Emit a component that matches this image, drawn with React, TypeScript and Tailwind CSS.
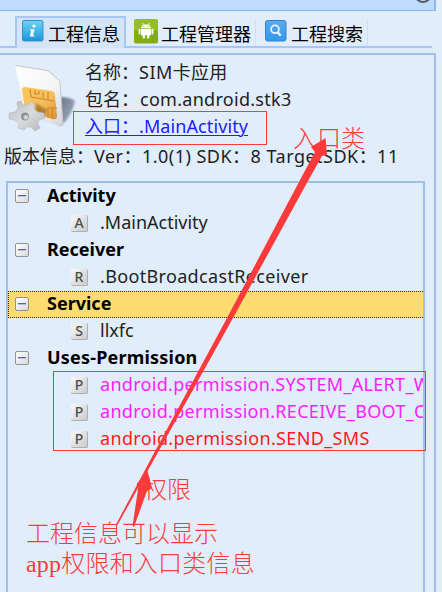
import type { ReactNode } from "react";

const ui = "font-['Noto_Sans','Noto_Sans_CJK_SC',sans-serif]";
const note = "font-['Liberation_Serif','Noto_Sans_CJK_SC',serif] font-light text-[#fb3a3c]";

function InfoIcon() {
  return (
    <svg width="22" height="22" viewBox="0 0 22 22" className="block shrink-0">
      <defs>
        <linearGradient id="info" x1="0" y1="0" x2="0" y2="1">
          <stop offset="0" stopColor="#6fd0f2" />
          <stop offset="0.5" stopColor="#45b7e8" />
          <stop offset="1" stopColor="#1b93d6" />
        </linearGradient>
      </defs>
      <rect x="0.5" y="0.5" width="20.5" height="20.5" rx="1.5" fill="url(#info)" stroke="#3592c8" />
      <circle cx="12" cy="6" r="1.6" fill="#fff" />
      <path d="M8.3 9.2H12.5L11 15.2H12.3V16.5H7.8L9.3 10.5H8Z" fill="#fff" />
    </svg>
  );
}

function AndroidIcon() {
  return (
    <svg width="24" height="25" viewBox="0 0 24 25" className="block shrink-0">
      <rect width="24" height="24.5" rx="2.5" fill="#82ad12" />
      <path d="M0 3Q0 0 3 0H21Q24 0 24 3V11Q12 14 0 11Z" fill="#94bf2a" />
      <path d="M8.3 4L9.7 6.2M15.7 4L14.3 6.2" stroke="#fff" strokeWidth="0.8" />
      <path d="M7 9.3C7 4.2 17 4.2 17 9.3Z" fill="#fff" />
      <circle cx="9.8" cy="7.5" r="0.6" fill="#8db51d" />
      <circle cx="14.2" cy="7.5" r="0.6" fill="#8db51d" />
      <path d="M7 10H17V16.2H15.3V19Q14.2 20.2 13.1 19V16.2H10.9V19Q9.8 20.2 8.7 19V16.2H7Z" fill="#fff" />
      <rect x="4.6" y="9.8" width="1.8" height="5.7" rx="0.9" fill="#fff" />
      <rect x="17.6" y="9.8" width="1.8" height="5.7" rx="0.9" fill="#fff" />
    </svg>
  );
}

function SearchIcon() {
  return (
    <svg width="22" height="22" viewBox="0 0 22 22" className="block shrink-0">
      <defs>
        <linearGradient id="search" x1="0" y1="0" x2="0" y2="1">
          <stop offset="0" stopColor="#5da9ea" />
          <stop offset="1" stopColor="#3198ea" />
        </linearGradient>
      </defs>
      <rect x="0.5" y="0.5" width="20.5" height="20.5" rx="2" fill="url(#search)" stroke="#3284d2" />
      <circle cx="10" cy="9.3" r="3.9" fill="#4b9ee8" stroke="#e8f3fd" strokeWidth="1.8" />
      <path d="M12.7 12.3L15.7 15.7" stroke="#e8f3fd" strokeWidth="2.4" />
    </svg>
  );
}

function SimIcon() {
  return (
    <svg width="68" height="68" viewBox="8 61 68 68" className="block shrink-0 overflow-visible">
      <defs>
        <linearGradient id="card" x1="0" y1="0" x2="1" y2="1">
          <stop offset="0" stopColor="#ffffff" />
          <stop offset="0.6" stopColor="#f4f4f5" />
          <stop offset="1" stopColor="#d2d4d8" />
        </linearGradient>
        <linearGradient id="chip" x1="0" y1="0" x2="1" y2="1">
          <stop offset="0" stopColor="#fdc75a" />
          <stop offset="0.55" stopColor="#f5be5e" />
          <stop offset="1" stopColor="#d9902e" />
        </linearGradient>
        <linearGradient id="gear" x1="0" y1="0" x2="1" y2="1">
          <stop offset="0" stopColor="#b4b6ba" />
          <stop offset="0.5" stopColor="#dcdde0" />
          <stop offset="1" stopColor="#b0b2b6" />
        </linearGradient>
        <linearGradient id="shade" x1="0" y1="0" x2="1" y2="1">
          <stop offset="0" stopColor="#6b7888" />
          <stop offset="1" stopColor="#a9b5c4" />
        </linearGradient>
        <filter id="soft"><feGaussianBlur stdDeviation="0.8" /></filter>
      </defs>
      <path d="M60 98Q70 98 75 102L72 112L66 122L60 126Z" fill="url(#shade)" filter="url(#soft)" />
      <path d="M15 66L48 71L60 82L63 126L59 127L26 116Z" fill="url(#card)" />
      <path d="M60 82L63 126L59 127" fill="none" stroke="#c3c6cb" strokeWidth="0.9" />
      <path d="M15.5 66.5L48 71.5L60 82" fill="none" stroke="#b9bbbe" strokeWidth="0.9" />
      <path d="M25 88L52 92Q55 93 55 96L57 117Q57 121 53 120L30 113Q25 110 24 104L22 91Q22 88 25 88Z" fill="url(#chip)" />
      <path d="M30 90L31 98L54 102M35 91V95H39V92M43 93V99M48 93V100M57 109L48 109V119M52 109V120" fill="none" stroke="#cf852a" strokeWidth="1.1" />
      <path d="M36 104L47 111L43 120L35 116Z" fill="#8a5a18" opacity="0.6" filter="url(#soft)" />
      <path
        d="M17 103L21 102L23 106L26 106L31 103L35 105L34 110L38 113L44 114L45 119L39 121L38 125L40 129L35 132L31 128L27 128L24 131L18 129L19 124L15 121L9 120L9 114L15 113L18 109Z"
        fill="url(#gear)" stroke="#b0b3b8" strokeWidth="0.5"
      />
      <circle cx="25" cy="117.5" r="4" fill="#8e9196" />
      <circle cx="26" cy="118.3" r="2.4" fill="#cfd2d7" />
    </svg>
  );
}

function Expander() {
  return (
    <span className="-mt-px flex h-[14px] w-[14px] shrink-0 flex-col items-center rounded-[2px] border border-[#929396] bg-linear-to-br from-white to-[#dadada] pt-[5px]">
      <span className="h-px w-2 bg-[#4f68b4]" />
      <span className="h-px w-2 bg-[#b5bfdd]" />
    </span>
  );
}

function Group({ name, cls = "" }: { name: string; cls?: string }) {
  return (
    <div className="flex h-[27px] items-center pl-[7px]">
      <Expander />
      <span className={`-mt-[2px] ml-[18px] whitespace-nowrap text-[18px] leading-[27px] font-bold text-black ${cls}`}>{name}</span>
    </div>
  );
}

function Item({ badge, children, cls = "text-[#222]" }: { badge: string; children: ReactNode; cls?: string }) {
  return (
    <div className="flex h-[27px] items-center overflow-hidden pl-[63px]">
      <span className="-mt-px flex h-[17px] w-[17px] shrink-0 items-center justify-center rounded-[2px] border-r border-b border-[#b0b0b0] bg-linear-to-br from-[#fafafa] to-[#cbcbcb] text-[14px] leading-none font-medium text-[#4c4c4c]">
        {badge}
      </span>
      <span className={`-mt-[2px] ml-[12px] whitespace-nowrap text-[18px] leading-[27px] ${cls}`}>{children}</span>
    </div>
  );
}

export default function App() {
  return (
    <div className={`relative h-[592px] w-[442px] overflow-hidden bg-[#e1edfb] ${ui}`}>
      <div className="h-[11px] w-[436px] overflow-hidden border-r-2 border-b border-[#8fb5eb] bg-[#bfdbff]">
        <div className="-mt-[15px] ml-[414px] h-[18px] w-[18px] rounded-full border-2 border-[#495767] bg-[#d9dde2]" />
      </div>

      <div className="mt-[5px] flex h-[32px] w-[432px]">
        <div className="w-[15px] border-b-2 border-[#a6c7f5]" />
        <div className="flex w-[111px] border-t-2 border-r-2 border-l-2 border-[#a6c7f5] bg-[#d5e4f6] pt-[2px] pl-[5px]">
          <InfoIcon />
          <span className="mt-px ml-[4px] whitespace-nowrap text-[18px] leading-[26px] text-black">工程信息</span>
        </div>
        <div className="flex flex-1 border-b-2 border-[#a6c7f5] pt-[3px]">
          <div className="flex w-[130px] border-r border-[#cfdff4] pl-[8px]">
            <AndroidIcon />
            <span className="ml-[3px] mt-[2px] whitespace-nowrap text-[18px] leading-[26px] text-black">工程管理器</span>
          </div>
          <div className="flex w-[112px] border-r border-[#cfdff4] pl-[9px]">
            <span className="mt-[1px]"><SearchIcon /></span>
            <span className="ml-[4px] mt-[2px] whitespace-nowrap text-[18px] leading-[26px] text-black">工程搜索</span>
          </div>
        </div>
      </div>

      <div className="mt-[5px] h-[539px] w-[436px] border-t-2 border-r-2 border-[#a0c0ec]">
        <div className="flex h-[88px] pt-[5px] pl-[8px]">
          <SimIcon />
          <div className="-mt-px ml-[9px] text-[18px] leading-[27px] whitespace-nowrap text-[#222]">
            <div>名称：<span className="tracking-[0.5px]">SIM</span><span className="tracking-[0.2px]">卡应用</span></div>
            <div>包名：<span className="ml-px tracking-[0.28px]">com.android.stk3</span></div>
            <div className="text-[#2020ff] underline decoration-1 underline-offset-2">入口：<span className="tracking-[0.1px]">.MainActivity</span></div>
          </div>
        </div>
        <div className="h-[38px] pl-[4px] text-[18px] leading-[27px] whitespace-nowrap text-[#222]">
          版本信息：<span className="tracking-[0.48px]">Ver：1.0(1) SDK：8 TargetSDK：11</span>
        </div>

        <div className="ml-[6px] h-[411px] w-[419px] border-2 border-b-0 border-[#a0bfe8]">
          <Group name="Activity" />
          <Item badge="A">.MainActivity</Item>
          <Group name="Receiver" />
          <Item badge="R" cls="text-[#222] tracking-[0.34px]">.BootBroadcastReceiver</Item>
          <div className="h-[27px] border-y border-l border-dotted border-[#30280c] bg-[#ffdc70]">
            <div className="-mt-px -ml-px"><Group name="Service" /></div>
          </div>
          <Item badge="S">llxfc</Item>
          <Group name="Uses-Permission" cls="tracking-[0.2px]" />
          <Item badge="P" cls="text-[#ff20ff] tracking-[0.3px]">android.permission.SYSTEM_ALERT_WINDOW</Item>
          <Item badge="P" cls="text-[#ff20ff] tracking-[0.3px]">android.permission.RECEIVE_BOOT_COMPLETED</Item>
          <Item badge="P" cls="text-[#ff1a1a] tracking-[0.34px]">android.permission.SEND_SMS</Item>
        </div>
      </div>

      {/* Annotations drawn over the panel */}
      <div className="absolute top-[111px] left-[73px] h-[34px] w-[194px] border border-[#fb3a3c]" />
      <div className="absolute top-[371px] left-[53px] h-[80px] w-[373px] border border-[#fb3a3c]" />
      <div className={`absolute top-[123px] left-[293px] text-[24px] leading-[32px] whitespace-nowrap ${note}`}>入口类</div>
      <div className={`absolute top-[474px] left-[143px] text-[24px] leading-[32px] whitespace-nowrap ${note}`}>权限</div>
      <div className={`absolute top-[519px] left-[26px] text-[24px] leading-[30px] whitespace-nowrap ${note}`}>
        工程信息可以显示<br />
        <span className="tracking-[0.2px]">app权限和入口类信息</span>
      </div>
      <svg width="442" height="592" viewBox="0 0 442 592" className="absolute top-0 left-0">
        <path d="M116 524.5L153 455L227 318L300 180L315 152L311 147L325.5 138L327 155L322 156L308.5 180L233 318L204 370L156.5 455L117.8 524.5Z" fill="#fb3a3c" />
        <path d="M132.5 526L138.5 486L136.5 484L147.5 471L152 488L147 491L134 527Z" fill="#fb3a3c" />
      </svg>
    </div>
  );
}
